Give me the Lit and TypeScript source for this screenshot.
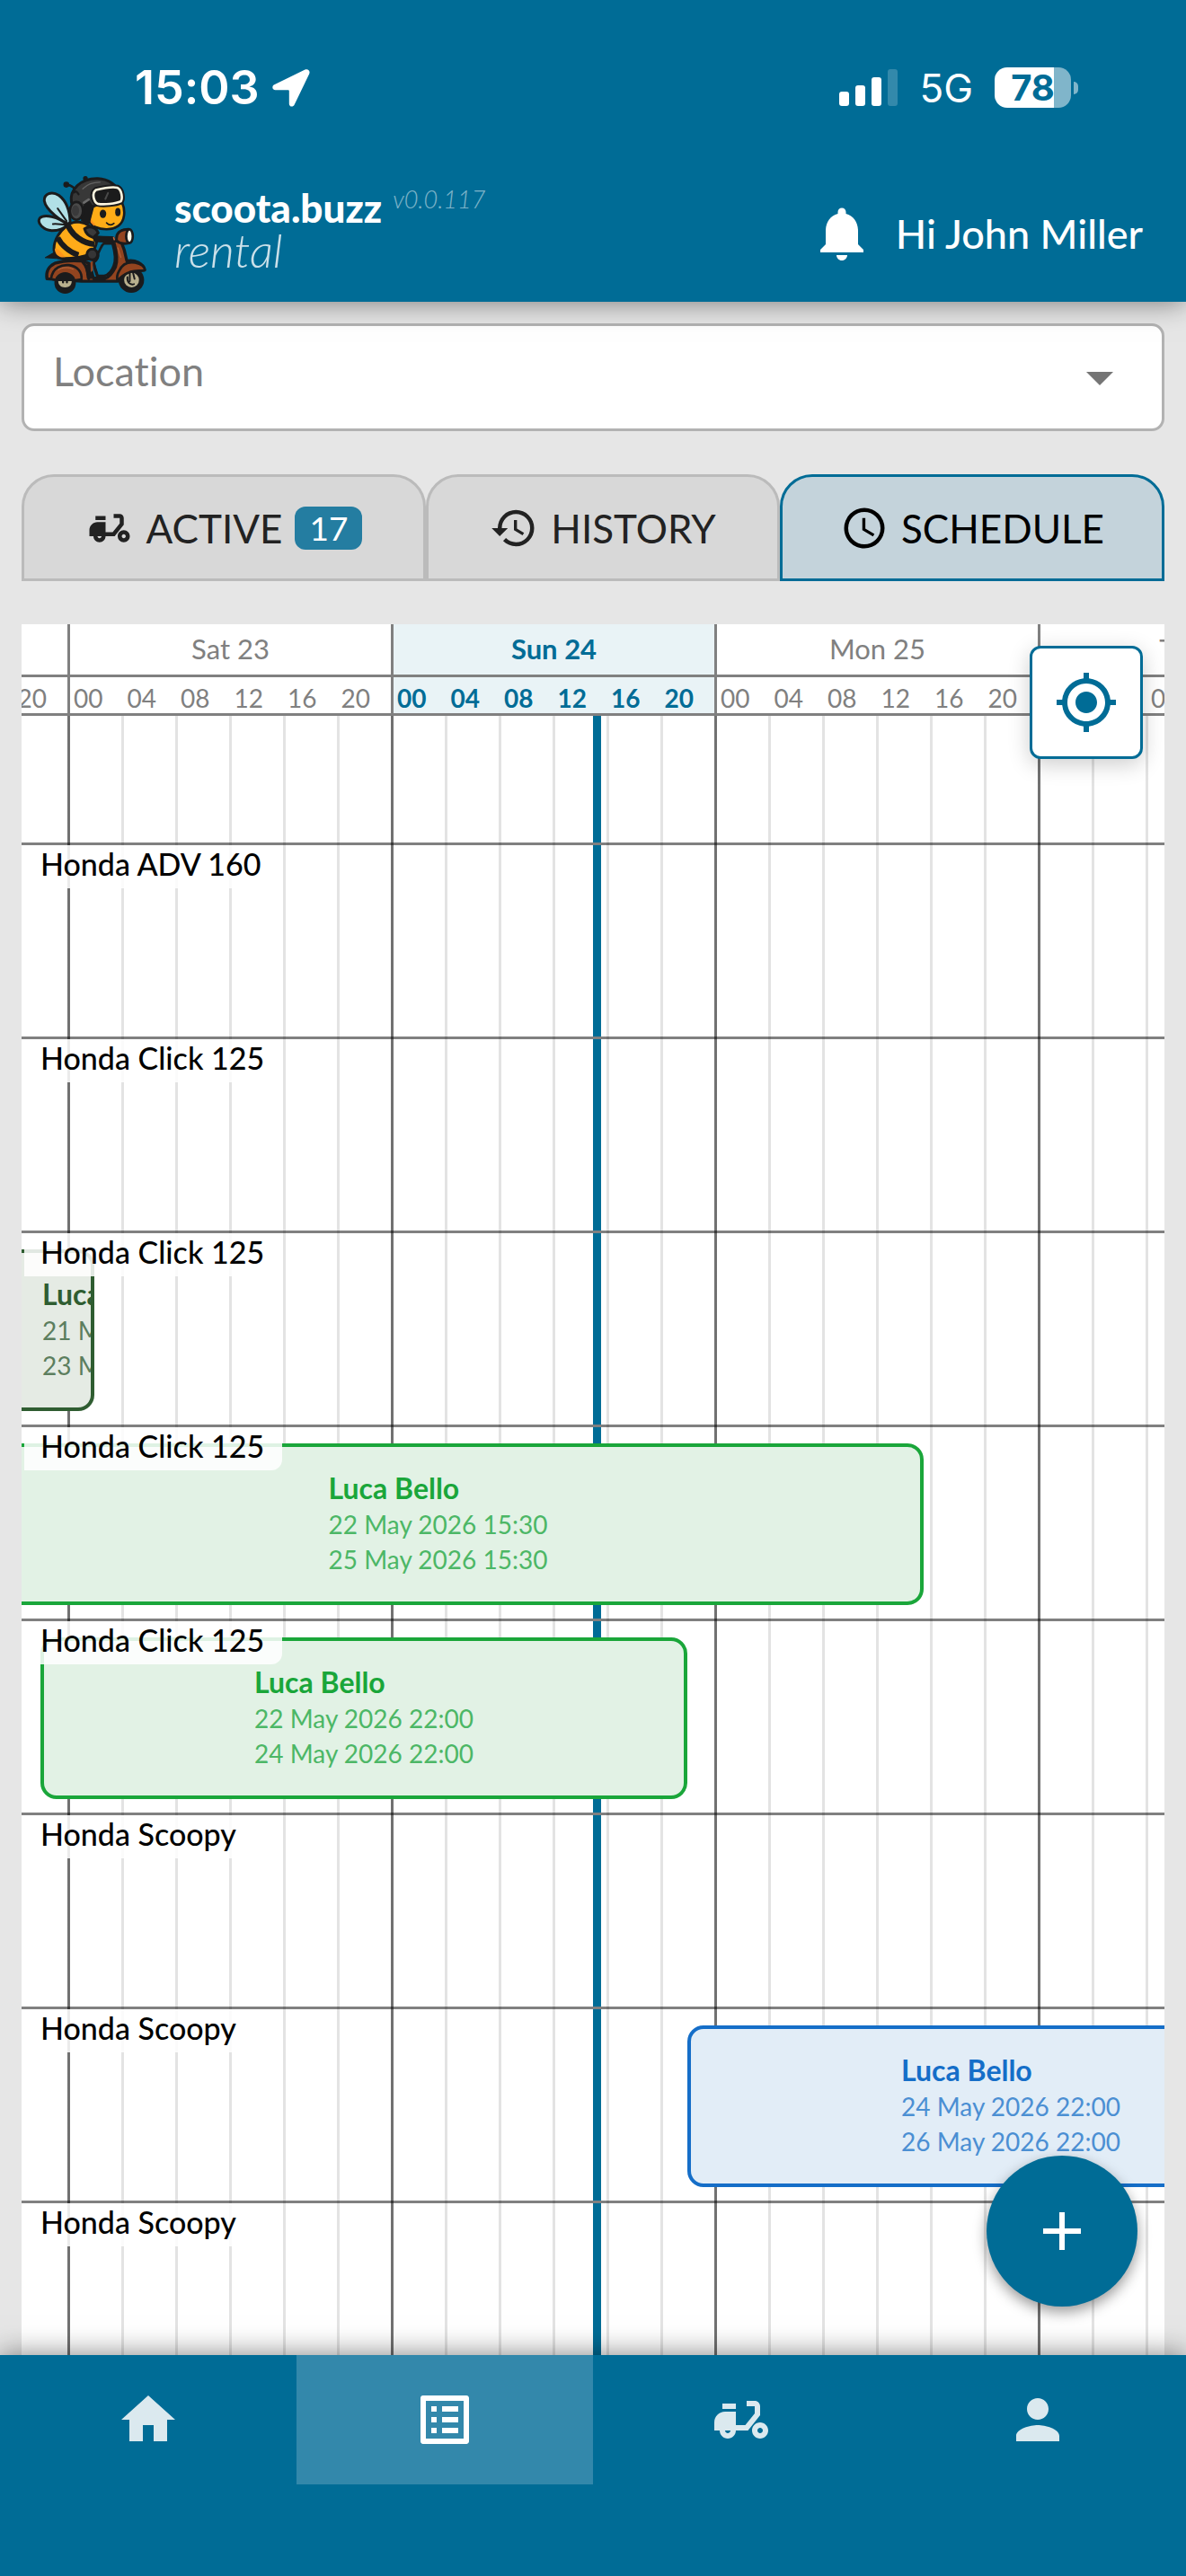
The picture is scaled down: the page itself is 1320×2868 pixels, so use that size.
import { LitElement, html, css } from "lit";
import { customElement, property, state } from "lit/decorators.js";
import { classMap } from "lit/directives/class-map.js";
import { styleMap } from "lit/directives/style-map.js";

type Tone = "done" | "live" | "next";

interface Booking {
  customer: string;
  from: string;
  to: string;
  /** Hours relative to Saturday 23, 00:00. */
  start: number;
  end: number;
  tone: Tone;
}

interface Vehicle {
  name: string;
  booking?: Booking;
}

const HOUR_WIDTH = 15;
const ORIGIN = 51;

const DAYS = ["Fri 22", "Sat 23", "Sun 24", "Mon 25", "Tue 26"];
const TODAY = "Sun 24";
const NOW_HOUR = 39;
const HOURS = ["00", "04", "08", "12", "16", "20"];

const VEHICLES: Vehicle[] = [
  { name: "Honda ADV 160" },
  { name: "Honda Click 125" },
  {
    name: "Honda Click 125",
    booking: { customer: "Luca Bello", from: "21 May 2026 02:00", to: "23 May 2026 02:00", start: -46, end: 2, tone: "done" },
  },
  {
    name: "Honda Click 125",
    booking: { customer: "Luca Bello", from: "22 May 2026 15:30", to: "25 May 2026 15:30", start: -8.5, end: 63.5, tone: "live" },
  },
  {
    name: "Honda Click 125",
    booking: { customer: "Luca Bello", from: "22 May 2026 22:00", to: "24 May 2026 22:00", start: -2, end: 46, tone: "live" },
  },
  { name: "Honda Scoopy" },
  {
    name: "Honda Scoopy",
    booking: { customer: "Luca Bello", from: "24 May 2026 22:00", to: "26 May 2026 22:00", start: 46, end: 94, tone: "next" },
  },
  { name: "Honda Scoopy" },
];

const ICONS = {
  bell: "M12 22c1.1 0 2-.9 2-2h-4c0 1.1.9 2 2 2zm6-6v-5c0-3.07-1.64-5.64-4.5-6.32V4c0-.83-.67-1.5-1.5-1.5s-1.5.67-1.5 1.5v.68C7.63 5.36 6 7.92 6 11v5l-2 2v1h16v-1l-2-2z",
  moped: "M19 15C19.55 15 20 15.45 20 16C20 16.55 19.55 17 19 17C18.45 17 18 16.55 18 16C18 15.45 18.45 15 19 15M19 13C17.34 13 16 14.34 16 16C16 17.66 17.34 19 19 19C20.66 19 22 17.66 22 16C22 14.34 20.66 13 19 13M10 6H5V8H10V6M17 5H14V7H17V9.65L13.5 14H10V9H6C3.79 9 2 10.79 2 13V16H4C4 17.66 5.34 19 7 19C8.66 19 10 17.66 10 16H14.5L19 10.35V7C19 5.9 18.1 5 17 5M7 17C6.45 17 6 16.55 6 16H8C8 16.55 7.55 17 7 17Z",
  history: "M13.5 8H12V13L16.28 15.54L17 14.33L13.5 12.25V8M13 3A9 9 0 0 0 4 12H1L4.96 16.03L9 12H6A7 7 0 0 1 13 5A7 7 0 0 1 20 12A7 7 0 0 1 13 19C11.07 19 9.32 18.21 8.06 16.94L6.64 18.36C8.27 20 10.5 21 13 21A9 9 0 0 0 22 12A9 9 0 0 0 13 3",
  clock: "M12 20A8 8 0 0 0 20 12A8 8 0 0 0 12 4A8 8 0 0 0 4 12A8 8 0 0 0 12 20M12 2A10 10 0 0 1 22 12A10 10 0 0 1 12 22C6.47 22 2 17.5 2 12A10 10 0 0 1 12 2M12.5 7V12.25L17 14.92L16.25 16.15L11 13V7H12.5Z",
  locate: "M12 8c-2.21 0-4 1.79-4 4s1.79 4 4 4 4-1.79 4-4-1.79-4-4-4zm8.94 3A8.994 8.994 0 0 0 13 3.06V1h-2v2.06A8.994 8.994 0 0 0 3.06 11H1v2h2.06A8.994 8.994 0 0 0 11 20.94V23h2v-2.06A8.994 8.994 0 0 0 20.94 13H23v-2h-2.06zM12 19c-3.87 0-7-3.13-7-7s3.13-7 7-7 7 3.13 7 7-3.13 7-7 7z",
  plus: "M19 13h-6v6h-2v-6H5v-2h6V5h2v6h6v2z",
  home: "M10 20v-6h4v6h5v-8h3L12 3 2 12h3v8z",
  list: "M19 5v14H5V5h14m1.1-2H3.9c-.5 0-.9.4-.9.9v16.2c0 .4.4.9.9.9h16.2c.4 0 .9-.5.9-.9V3.9c0-.5-.5-.9-.9-.9zM11 7h6v2h-6V7zm0 4h6v2h-6v-2zm0 4h6v2h-6zM7 7h2v2H7zm0 4h2v2H7zm0 4h2v2H7z",
  person: "M12 12c2.21 0 4-1.79 4-4s-1.79-4-4-4-4 1.79-4 4 1.79 4 4 4zm0 2c-2.67 0-8 1.34-8 4v2h16v-2c0-2.66-5.33-4-8-4z",
  caret: "M7 10l5 5 5-5z",
};

const icon = (name: keyof typeof ICONS) =>
  html`<svg class="icon" viewBox="0 0 24 24" aria-hidden="true"><path fill="currentColor" d=${ICONS[name]}></path></svg>`;

@customElement("status-bar")
export class StatusBar extends LitElement {
  static styles = css`
    :host {
      display: flex;
      align-items: center;
      justify-content: space-between;
      height: 195px;
      padding: 0 120px 0 150px;
      color: #fff;
      font-family: Inter, "Liberation Sans", sans-serif;
    }
    .side {
      display: flex;
      align-items: center;
    }
    .left {
      gap: 14px;
    }
    .right {
      gap: 24px;
    }
    .time {
      font-size: 52px;
      font-weight: 600;
    }
    .network {
      font-size: 44px;
      font-weight: 400;
    }
    .arrow {
      width: 42px;
      height: 42px;
    }
    .signal {
      display: flex;
      align-items: flex-end;
      gap: 7px;
    }
    .bar {
      width: 11px;
      border-radius: 3px;
      background: #fff;
    }
    .b1 { height: 16px; }
    .b2 { height: 23px; }
    .b3 { height: 32px; }
    .b4 { height: 41px; opacity: 0.2; }
    .battery {
      display: flex;
      align-items: center;
      gap: 3px;
    }
    .cell {
      display: flex;
      align-items: center;
      justify-content: center;
      width: 85px;
      height: 45px;
      border-radius: 14px;
      background: linear-gradient(to right, #fff 78%, #80b5ca 78%);
      color: #006c96;
      font-size: 40px;
      font-weight: 700;
    }
    .tip {
      width: 5px;
      height: 14px;
      border-radius: 0 7px 7px 0;
      background: #80b5ca;
    }
  `;

  render() {
    return html`
      <div class="side left">
        <span class="time">15:03</span>
        <svg class="arrow" viewBox="0 0 42 42" aria-hidden="true">
          <path
            fill="#fff"
            d="M36.500.6L2.300 17.300C-1 19 .100 23.300 3.500 23.300H17.500C18.400 23.300 18.800 23.800 18.800 24.600V38.500C18.800 42 23.200 42.800 24.700 39.500L41.200 5.200C42.600 2 39.700-.9 36.500.6Z"
          ></path>
        </svg>
      </div>
      <div class="side right">
        <div class="signal">
          <span class="bar b1"></span><span class="bar b2"></span><span class="bar b3"></span><span class="bar b4"></span>
        </div>
        <span class="network">5G</span>
        <div class="battery"><span class="cell">78</span><span class="tip"></span></div>
      </div>
    `;
  }
}

@customElement("bee-logo")
export class BeeLogo extends LitElement {
  static styles = css`
    :host {
      display: block;
      width: 123px;
      height: 132px;
    }
    svg {
      display: block;
      width: 100%;
      height: 100%;
    }
  `;

  render() {
    return html`
      <svg viewBox="33 42 369 398" role="img" aria-label="Bee riding a scooter">
        <g stroke="#1b1b1c" stroke-width="9" stroke-linejoin="round" stroke-linecap="round">
          <path fill="#1b1b1c" d="M96 298L60 319L104 322Z" stroke-width="3"></path>
          <path fill="#b1e0e6" d="M140 206C118 200 62 160 57 128C56 104 82 94 106 110C130 128 142 160 144 198Z"></path>
          <path fill="#b1e0e6" d="M134 208C104 180 56 172 42 186C30 204 56 226 82 228C104 228 124 222 134 208Z"></path>
          <path fill="none" stroke-width="6" d="M102 154L132 196M86 206C100 204 116 208 128 208"></path>

          <path fill="#ffab19" d="M146 204C110 224 86 262 90 296C96 316 112 322 130 322C168 320 204 316 222 294C240 268 236 232 208 212C188 198 160 196 146 204Z"></path>
          <path fill="#ff951a" stroke="none" d="M92 290C98 284 112 298 128 318C104 320 94 308 92 290Z"></path>
          <path fill="none" stroke-width="19" stroke-linecap="butt" d="M137 212C152 244 184 270 226 274"></path>
          <path fill="none" stroke-width="18" stroke-linecap="butt" d="M102 252C114 276 142 302 172 310"></path>
          <path fill="#3a3a3b" d="M192 222C206 212 230 214 238 236L222 252C208 248 196 238 192 222Z"></path>
          <path fill="none" stroke-width="22" d="M232 256C250 258 262 258 284 258"></path>

          <path fill="#93441f" stroke-width="10" d="M92 338C130 326 184 328 196 334L208 338L222 388H262C276 384 286 370 296 350C304 330 298 292 290 264L314 262C322 280 330 306 334 330C362 324 390 340 394 360L346 370C326 374 314 388 304 398H182L66 390C62 366 72 348 92 338Z"></path>
          <path fill="#006c96" stroke-width="8" d="M222 336C234 328 240 316 238 304C246 288 250 276 256 272H286C294 300 298 326 290 346C284 362 276 376 258 380H236Z"></path>
          <path fill="#93441f" stroke-width="8" d="M80 390C84 350 118 342 140 344C170 348 184 368 182 392C150 398 100 396 80 390Z"></path>
          <path fill="none" stroke="#b86a40" stroke-width="3" d="M104 360C118 350 140 350 154 358M322 346C340 338 358 342 370 350M304 286L314 318"></path>
          <path fill="none" stroke-width="9" d="M186 334C200 348 204 368 206 390M222 330C224 350 230 370 236 384"></path>
          <path fill="#1b1b1c" stroke-width="4" d="M196 344L212 342L216 388H202Z"></path>
          <path fill="#93441f" stroke="none" d="M212 334L220 330L220 362L213 368Z"></path>
          <ellipse cx="218" cy="308" rx="18" ry="18" fill="#353536"></ellipse>
          <path fill="#1b1b1c" d="M104 322C140 332 180 332 210 326L196 312L150 320Z" stroke-width="4"></path>

          <path fill="#93441f" d="M300 262C296 236 312 224 340 224C332 240 330 256 340 270C324 274 308 270 300 262Z"></path>
          <ellipse cx="343" cy="247" rx="11" ry="23" fill="#fffbe8" stroke-width="8"></ellipse>
          <path fill="none" stroke="#c46a42" stroke-width="5" d="M290 252L292 258"></path>

          <circle cx="127" cy="404" r="36" fill="#1b1b1c" stroke="none"></circle>
          <path fill="#b9b08e" stroke="none" d="M104 398H149C149 412 140 419 127 419C113 419 104 411 104 398Z"></path>
          <path stroke-width="7" d="M120 398V402M133 398V402"></path>
          <circle cx="349" cy="394" r="43" fill="#1b1b1c" stroke="none"></circle>
          <circle cx="350" cy="394" r="25" fill="#b9b08e" stroke="none"></circle>
          <path fill="none" stroke-width="6" d="M344 372V398M354 366L360 390M336 384C334 400 344 412 358 408"></path>
          <path fill="#93441f" stroke-width="8" d="M308 364C318 342 338 332 362 336C382 340 396 350 394 362C372 362 352 362 338 370C324 376 312 386 302 396C300 384 302 374 308 364Z"></path>

          <path fill="none" stroke-width="8" d="M132 74C150 76 160 84 166 100M196 54L206 62"></path>
          <circle cx="131" cy="74" r="7" fill="#1b1b1c" stroke-width="6"></circle>
          <circle cx="195" cy="53" r="5" fill="#1b1b1c" stroke-width="6"></circle>

          <path fill="#ffac17" stroke-width="8" d="M208 152C202 180 206 206 228 216C250 226 284 228 306 212C328 196 330 160 318 134L216 140Z"></path>
          <path fill="none" stroke="#ff8f1c" stroke-width="7" d="M211 160C208 184 212 200 224 208"></path>
          <path fill="#383838" d="M148 132C142 92 178 52 236 53C272 54 302 76 310 104L220 148L206 200L158 172Z"></path>
          <path fill="#1b1b1c" stroke="none" d="M206 124L222 146L208 208L180 196L190 140Z"></path>
          <path fill="none" stroke="#636363" stroke-width="4" d="M186 88C200 74 222 66 244 66"></path>
          <path fill="none" stroke="#6c6c6c" stroke-width="8" d="M190 134L206 124"></path>
          <path fill="none" stroke-width="7" d="M158 100C162 92 168 100 172 106"></path>
          <ellipse cx="165" cy="162" rx="22" ry="30" fill="#4a4a4a" stroke-width="8"></ellipse>
          <ellipse cx="162" cy="161" rx="12" ry="18" fill="#3a3a3b" stroke="none"></ellipse>
          <path fill="#1b1b1c" stroke="#1b1b1c" stroke-width="20" d="M230 92C254 86 282 80 302 84C318 90 320 122 314 130C298 138 256 142 236 138C222 130 216 102 230 92Z"></path>
          <path fill="#1b1b1c" stroke="#fdf6df" stroke-width="8" d="M230 92C254 86 282 80 302 84C318 90 320 122 314 130C298 138 256 142 236 138C222 130 216 102 230 92Z"></path>
          <path fill="none" stroke="#4a4a4a" stroke-width="6" d="M271 102L262 122"></path>

          <ellipse cx="254" cy="172" rx="11" ry="14" fill="#1b1b1c" stroke="none"></ellipse>
          <ellipse cx="304" cy="166" rx="9" ry="14" fill="#1b1b1c" stroke="none"></ellipse>
          <path fill="none" stroke-width="5" d="M266 202C274 210 284 210 291 204"></path>
        </g>
      </svg>
    `;
  }
}

@customElement("booking-card")
export class BookingCard extends LitElement {
  @property({ attribute: false }) booking!: Booking;

  static styles = css`
    :host {
      display: block;
    }
    .card {
      box-sizing: border-box;
      display: flex;
      align-items: center;
      justify-content: center;
      height: 180px;
      border: 4px solid var(--line);
      border-radius: 18px;
      background: var(--fill);
      color: var(--soft);
      overflow: hidden;
      font-size: 28px;
      line-height: 39px;
      white-space: nowrap;
    }
    .done {
      --line: #2f5d31;
      --soft: #5c7e5e;
      --fill: #e5ebe4;
      justify-content: flex-end;
    }
    .live {
      --line: #1aa63a;
      --soft: #4cb766;
      --fill: #e2f2e5;
    }
    .next {
      --line: #156ec8;
      --soft: #4b8fd3;
      --fill: #e2edf7;
    }
    .text {
      display: flex;
      flex-direction: column;
    }
    .done .text {
      width: 54px;
    }
    .name {
      padding-bottom: 4px;
      color: var(--line);
      font-size: 32px;
      font-weight: 700;
      line-height: 35px;
    }
  `;

  render() {
    const b = this.booking;
    return html`
      <div class="card ${b.tone}">
        <div class="text">
          <span class="name">${b.customer}</span>
          <span>${b.from}</span>
          <span>${b.to}</span>
        </div>
      </div>
    `;
  }
}

@customElement("schedule-board")
export class ScheduleBoard extends LitElement {
  static styles = css`
    :host {
      position: relative;
      display: flex;
      flex-direction: column;
      background: #fff;
      overflow: hidden;
    }
    .days {
      display: flex;
      margin-left: -309px;
    }
    .day {
      box-sizing: border-box;
      flex: 0 0 360px;
      border-left: 3px solid #808080;
      color: #808080;
    }
    .today {
      background: #e9f3f6;
      color: #006c96;
      font-weight: 700;
    }
    .title {
      padding-bottom: 2px;
      font-size: 31px;
      line-height: 54px;
      text-align: center;
    }
    .hours {
      display: flex;
      padding-top: 6px;
      border-top: 3px solid #808080;
      border-bottom: 3px solid #808080;
      font-size: 28px;
      line-height: 34px;
    }
    .hour {
      flex: 1;
      padding-left: 4px;
    }
    .body {
      position: relative;
      flex: 1;
      min-height: 0;
      overflow: hidden;
    }
    .now {
      position: absolute;
      top: 0;
      bottom: 0;
      width: 9px;
      background: #006c96;
    }
    .lines {
      position: absolute;
      inset: 0;
      z-index: 1;
      pointer-events: none;
    }
    .column {
      flex: 0 0 360px;
      background:
        linear-gradient(rgba(0, 0, 0, 0.5) 0 0) 0 0 / 3px 100% no-repeat,
        repeating-linear-gradient(to right, rgba(0, 0, 0, 0.11) 0 3px, transparent 3px 60px);
    }
    .rows {
      margin: 0;
      padding: 141px 0 0;
      list-style: none;
    }
    .row {
      position: relative;
      box-sizing: border-box;
      height: 216px;
      border-top: 3px solid #808080;
    }
    .label {
      position: relative;
      z-index: 3;
      display: inline-block;
      margin-left: 3px;
      padding: 0 20px 6px 18px;
      border-bottom-right-radius: 12px;
      background: rgba(255, 255, 255, 0.86);
      color: #000;
      font-size: 34px;
      font-weight: 500;
      line-height: 42px;
      vertical-align: top;
    }
    .booking {
      position: absolute;
      top: 18px;
      z-index: 2;
    }
    .locate {
      position: absolute;
      top: 24px;
      right: 24px;
      z-index: 4;
      display: grid;
      place-items: center;
      width: 126px;
      height: 126px;
      padding: 0;
      border: 3px solid #006c96;
      border-radius: 12px;
      background: #fff;
      color: #006c96;
      box-shadow: 0 6px 24px rgba(0, 0, 0, 0.2);
    }
    .icon {
      width: 72px;
      height: 72px;
    }
  `;

  private renderRow(v: Vehicle) {
    const b = v.booking;
    return html`
      <li class="row">
        <span class="label">${v.name}</span>
        ${b
          ? html`<booking-card
              class="booking"
              .booking=${b}
              style=${styleMap({
                left: `${ORIGIN + b.start * HOUR_WIDTH}px`,
                width: `${(b.end - b.start) * HOUR_WIDTH}px`,
              })}
            ></booking-card>`
          : null}
      </li>
    `;
  }

  render() {
    return html`
      <div class="days">
        ${DAYS.map(
          (d) => html`
            <div class=${classMap({ day: true, today: d === TODAY })}>
              <div class="title">${d}</div>
              <div class="hours">${HOURS.map((h) => html`<span class="hour">${h}</span>`)}</div>
            </div>
          `
        )}
      </div>
      <div class="body">
        <div class="now" style=${styleMap({ left: `${ORIGIN + NOW_HOUR * HOUR_WIDTH}px` })}></div>
        <ul class="rows">
          ${VEHICLES.map((v) => this.renderRow(v))}
        </ul>
        <div class="lines days">${DAYS.map(() => html`<span class="column"></span>`)}</div>
      </div>
      <button class="locate" type="button" aria-label="Go to now">${icon("locate")}</button>
    `;
  }
}

@customElement("app-root")
export class AppRoot extends LitElement {
  @state() private tab = "schedule";

  static styles = css`
    :host {
      display: flex;
      flex-direction: column;
      height: 100vh;
      background: #e6e6e6;
      font-family: Lato, "Open Sans", sans-serif;
      font-variant-ligatures: none;
    }
    .header {
      position: relative;
      z-index: 5;
      background: #006c96;
      color: #fff;
      box-shadow: 0 0 30px rgba(0, 0, 0, 0.5);
    }
    .brandbar {
      display: flex;
      align-items: center;
      justify-content: space-between;
      padding: 0 48px 9px 41px;
    }
    .brand {
      display: flex;
      align-items: flex-start;
      gap: 30px;
    }
    .words {
      display: grid;
      grid-template-columns: auto auto;
      column-gap: 12px;
      padding-top: 12px;
    }
    .name {
      font-size: 44px;
      font-weight: 900;
      line-height: 48px;
    }
    .version {
      color: rgba(255, 255, 255, 0.5);
      font-size: 27px;
      font-style: italic;
      font-weight: 300;
      line-height: 30px;
    }
    .product {
      color: rgba(255, 255, 255, 0.8);
      font-size: 52px;
      font-style: italic;
      font-weight: 300;
      line-height: 46px;
    }
    .user {
      display: flex;
      align-items: center;
      gap: 24px;
      padding-bottom: 2px;
      font-size: 45px;
      font-weight: 500;
    }
    .bell {
      display: flex;
      padding: 0;
      border: 0;
      background: none;
      color: inherit;
    }
    .icon {
      width: 72px;
      height: 72px;
      flex: none;
    }
    .main {
      position: relative;
      flex: 1;
      min-height: 0;
      display: flex;
      flex-direction: column;
      gap: 48px;
      padding: 24px 24px 0;
    }
    .location {
      display: grid;
      align-items: center;
      color: #757575;
    }
    .select {
      grid-area: 1 / 1;
      box-sizing: border-box;
      width: 100%;
      height: 120px;
      padding: 0 108px 14px 32px;
      border: 3px solid #b2b2b2;
      border-radius: 14px;
      appearance: none;
      background: #fff;
      color: #808080;
      font: inherit;
      font-size: 45px;
      font-variant-ligatures: none;
    }
    .location .icon {
      grid-area: 1 / 1;
      justify-self: end;
      margin-right: 36px;
      pointer-events: none;
    }
    .tabs {
      display: grid;
      grid-template-columns: 450fr 394fr 428fr;
    }
    .tab {
      display: flex;
      align-items: center;
      justify-content: center;
      gap: 14px;
      height: 119px;
      padding: 0;
      border: 3px solid #bbb;
      border-radius: 36px 36px 0 0;
      background: #d8d8d8;
      color: #222;
      font-family: inherit;
      font-size: 44px;
      text-transform: uppercase;
    }
    .tab .icon {
      width: 54px;
      height: 54px;
    }
    .tab.on {
      border-color: #006c96;
      background: #c4d3db;
      color: #000;
    }
    .count {
      padding: 0 16px;
      border-radius: 12px;
      background: #247da1;
      color: #fff;
      font-size: 37px;
      line-height: 48px;
    }
    .board {
      flex: 1;
      min-height: 0;
    }
    .fab {
      position: absolute;
      right: 54px;
      bottom: 54px;
      z-index: 4;
      display: grid;
      place-items: center;
      width: 168px;
      height: 168px;
      padding: 0;
      border: 0;
      border-radius: 50%;
      background: #006c96;
      color: #fff;
      box-shadow: 0 6px 15px rgba(0, 0, 0, 0.4);
    }
    .nav {
      position: relative;
      z-index: 5;
      display: flex;
      padding-bottom: 102px;
      background: #006c96;
      box-shadow: 0 0 30px rgba(0, 0, 0, 0.5);
    }
    .link {
      display: grid;
      place-items: center;
      flex: 1;
      height: 144px;
      color: #dbe9ef;
    }
    .link.on {
      background: #3388ab;
      color: #fff;
    }
  `;

  private renderTab(id: string, label: string, name: keyof typeof ICONS, count?: number) {
    return html`
      <button
        type="button"
        class=${classMap({ tab: true, on: this.tab === id })}
        aria-pressed=${this.tab === id}
        @click=${() => (this.tab = id)}
      >
        ${icon(name)}<span>${label}</span>${count ? html`<span class="count">${count}</span>` : null}
      </button>
    `;
  }

  render() {
    return html`
      <header class="header">
        <status-bar></status-bar>
        <div class="brandbar">
          <div class="brand">
            <bee-logo></bee-logo>
            <div class="words">
              <span class="name">scoota.buzz</span>
              <span class="version">v0.0.117</span>
              <span class="product">rental</span>
            </div>
          </div>
          <div class="user">
            <button class="bell" type="button" aria-label="Notifications">${icon("bell")}</button>
            <span>Hi John Miller</span>
          </div>
        </div>
      </header>
      <main class="main">
        <div class="location">
          <select class="select" aria-label="Location">
            <option>Location</option>
          </select>
          ${icon("caret")}
        </div>
        <div class="tabs">
          ${this.renderTab("active", "Active", "moped", 17)}
          ${this.renderTab("history", "History", "history")}
          ${this.renderTab("schedule", "Schedule", "clock")}
        </div>
        <schedule-board class="board"></schedule-board>
        <button class="fab" type="button" aria-label="Add booking">${icon("plus")}</button>
      </main>
      <nav class="nav">
        <a class="link" href="#home" aria-label="Home">${icon("home")}</a>
        <a class="link on" href="#rentals" aria-label="Rentals">${icon("list")}</a>
        <a class="link" href="#scooters" aria-label="Scooters">${icon("moped")}</a>
        <a class="link" href="#profile" aria-label="Profile">${icon("person")}</a>
      </nav>
    `;
  }
}
